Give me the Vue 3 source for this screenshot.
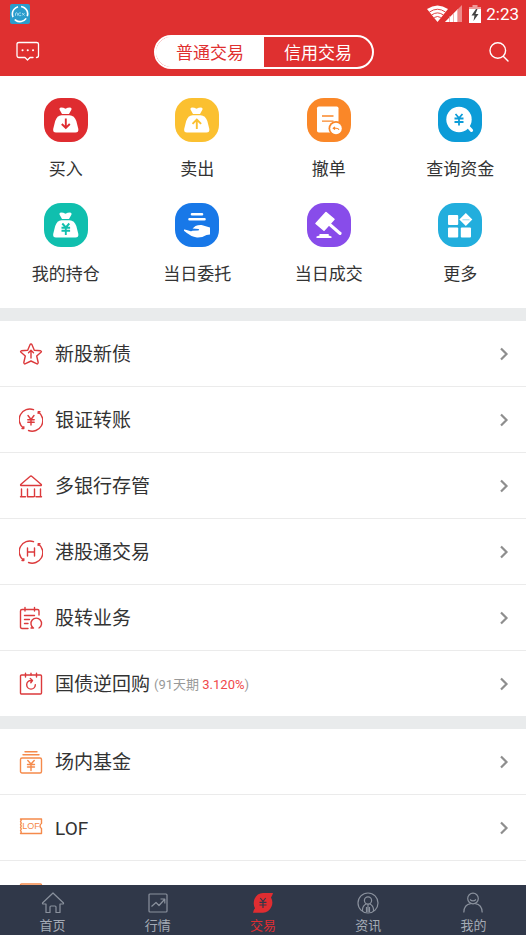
<script setup>
import { ref } from 'vue'

const market = ref('普通交易')
const markets = ['普通交易', '信用交易']

const actions = [
  { label: '买入', icon: 'buy', tone: 'red' },
  { label: '卖出', icon: 'sell', tone: 'yellow' },
  { label: '撤单', icon: 'cancel', tone: 'orange' },
  { label: '查询资金', icon: 'funds', tone: 'blue' },
  { label: '我的持仓', icon: 'hold', tone: 'teal' },
  { label: '当日委托', icon: 'entrust', tone: 'royal' },
  { label: '当日成交', icon: 'deal', tone: 'purple' },
  { label: '更多', icon: 'more', tone: 'sky' },
]

const services = [
  { label: '新股新债', icon: 'star' },
  { label: '银证转账', icon: 'transfer' },
  { label: '多银行存管', icon: 'bank' },
  { label: '港股通交易', icon: 'hk' },
  { label: '股转业务', icon: 'note' },
  { label: '国债逆回购', icon: 'repo', term: '91天期', rate: '3.120%' },
]

const funds = [
  { label: '场内基金', icon: 'fund' },
  { label: 'LOF', icon: 'lof' },
  { label: '', icon: 'card' },
]

const tabs = [
  { label: '首页', icon: 'home' },
  { label: '行情', icon: 'quotes' },
  { label: '交易', icon: 'trade' },
  { label: '资讯', icon: 'news' },
  { label: '我的', icon: 'me' },
]
const current = ref('交易')
</script>

<template>
  <div class="app">
    <header class="top">
      <div class="status">
        <svg class="app-badge" width="20" height="20" viewBox="0 0 20 20">
          <rect width="20" height="20" rx="2" fill="#2b9ccc" />
          <circle cx="10" cy="10" r="7.6" fill="none" stroke="#fff" stroke-width="1.6" stroke-dasharray="13 3" transform="rotate(35 10 10)" />
          <path d="M5.500 11.800V9.300q1.800-1.400 2.200.4v2M11 9H9.300q-.8.1-.8 1.300t.8 1.300H11M12 9l2.600 2.600M14.600 9 12 11.600" fill="none" stroke="#b5e6f7" stroke-width=".8" />
        </svg>
        <div class="status-right">
          <svg width="37" height="18" viewBox="0 0 37 18">
            <path d="M0 4Q10.500-3 21 4L10.500 17Z" fill="#fff" />
            <path d="M2.500 7Q10.500 1.500 18.500 7M4.800 9.800Q10.500 6 16.200 9.800M7.200 12.500Q10.500 10.500 13.800 12.500" fill="none" stroke="#df3030" stroke-width=".9" />
            <path d="M18 17 35 0V17Z" fill="#ee8989" />
            <path d="M18 17 31 4V17Z" fill="#fff" />
            <path d="M22.500 11v6M26.500 8v9M30.500 4v13" stroke="#e89292" stroke-width=".7" />
          </svg>
          <svg width="12" height="18" viewBox="0 0 12 18">
            <path d="M3.500 0h5v2H12v3H0V2h3.500Z" fill="#ee9b9b" />
            <path d="M0 4h12v14H0Z" fill="#fff" />
            <path d="M7 4 2.500 10.500h3L4.500 16 9.500 9h-3L8.500 4Z" fill="#444" />
          </svg>
          <span class="clock">2:23</span>
        </div>
      </div>
      <div class="bar">
        <button class="icon-btn" aria-label="消息">
          <svg width="24" height="22" viewBox="0 0 24 22" fill="none" stroke="#fff" stroke-width="1.300" stroke-linejoin="round" stroke-linecap="round">
            <path d="M17 16.500h-3L11.500 19 9 16.500H3Q1 16.500 1 14.500V3Q1 1.500 3 1.500H20.500Q22.500 1.500 22.500 3V14.500Q22.500 16.500 20.500 16.500" />
            <path d="M6.500 9.200h.1M11.700 9.200h.1M17 9.200h.1" stroke-width="2" />
          </svg>
        </button>
        <div class="segment">
          <button v-for="m in markets" :key="m" :class="{ on: market === m }" @click="market = m">{{ m }}</button>
        </div>
        <button class="icon-btn" aria-label="搜索">
          <svg width="22" height="22" viewBox="0 0 22 22" fill="none" stroke="#fff" stroke-width="1.400" stroke-linecap="round">
            <circle cx="9.800" cy="9.500" r="7.800" />
            <path d="m15.500 15.500 4.500 4.500" />
          </svg>
        </button>
      </div>
    </header>

    <main class="content">
      <section class="grid">
        <button v-for="a in actions" :key="a.label" class="action">
          <span class="tile" :class="a.tone">
            <svg width="44" height="44" viewBox="0 0 44 44">
              <template v-if="a.icon === 'buy' || a.icon === 'sell' || a.icon === 'hold'">
                <path d="M15.500 11.500Q15 9.500 17 9.500Q19.500 9.500 21.500 10.800Q23.500 9.500 26 9.500Q28 9.500 27.500 11.500L25 16H18Z" fill="#fff" />
                <path d="M17.500 17.200H25.500Q30.500 17.500 32.300 23L34.300 31Q34.800 34.500 31.500 34.500H12Q8.700 34.500 9.200 31L11.200 23Q13 17.500 17.500 17.200Z" fill="#fff" />
                <g class="mark" fill="none" stroke-width="1.900">
                  <path v-if="a.icon === 'buy'" d="M21.800 20.500V30M17.800 26l4 4 4-4" />
                  <path v-else-if="a.icon === 'sell'" d="M21.800 31V21.500M17.500 25.800l4.300-4.300 4.300 4.300" />
                  <path v-else d="m18.300 20.500 3.500 4 3.500-4M17.500 24.700h8.600M17.500 27.800h8.600M21.800 24.500V32" />
                </g>
              </template>
              <template v-else-if="a.icon === 'cancel'">
                <rect x="10" y="8.500" width="21.500" height="26" rx="1.800" fill="#fff" />
                <path class="mark" d="M15 18h11.500M15 23.200h11.500" stroke-width="1.300" />
                <circle class="mark-fill" cx="29" cy="30.500" r="7.500" />
                <circle cx="29" cy="30.500" r="5.800" fill="#fff" />
                <path class="mark" d="M32 31.800q-.5-1.500-3-1.500h-2.500M28 28.800 26.200 30.300l1.800 1.300" fill="none" stroke-width="1.100" />
              </template>
              <template v-else-if="a.icon === 'funds'">
                <circle cx="21" cy="21.500" r="12.700" fill="#fff" />
                <path d="m29 27.500 4.500 4.800" stroke="#fff" stroke-width="3.200" stroke-linecap="round" />
                <path class="mark" d="m17.500 16 3.500 4 3.500-4M16.500 20.500h9M16.500 24h9M21 20v7.500" fill="none" stroke-width="1.800" />
              </template>
              <template v-else-if="a.icon === 'entrust'">
                <path d="M17 11.300h10M14.500 16.300h15" stroke="#fff" stroke-width="2.600" stroke-linecap="round" />
                <path d="M9 26.500Q10 26 15 28Q16.500 28.600 17.500 27.800L23 27.500Q25 27.200 23.500 26L17.500 25.500L20.500 23Q23 21.800 26.500 22L35 24.500V31.500L31.500 32Q27 34.800 22 34.500Q16 34 9 27.800Z" fill="#fff" />
              </template>
              <template v-else-if="a.icon === 'deal'">
                <path d="M19 9.500 27 16.300 17 27.300 9 20.500Z" fill="#fff" stroke="#fff" stroke-width="1.500" stroke-linejoin="round" />
                <path d="m22.800 21.500 10.300 9" stroke="#fff" stroke-width="3" stroke-linecap="round" />
                <path d="M12.500 31h9.200v1.500l2.800 1v1.500H9.500v-1.500l3-1Z" fill="#fff" />
              </template>
              <g v-else fill="#fff">
                <rect x="10" y="12" width="10.200" height="10" rx="1" />
                <rect x="10" y="24.500" width="10.200" height="10" rx="1" />
                <rect x="22.800" y="24.500" width="10.200" height="10" rx="1" />
                <path d="m27.800 10 6.500 6.500-6.500 6.500-6.500-6.500Z" />
                <path class="mark" d="M24.500 16.800h7" stroke-width=".8" opacity=".6" />
              </g>
            </svg>
          </span>
          <span class="action-label">{{ a.label }}</span>
        </button>
      </section>

      <ul v-for="(list, i) in [services, funds]" :key="i" class="list" :class="{ warm: i === 1 }">
        <li v-for="item in list" :key="item.icon">
          <a href="#" class="row">
            <svg class="row-icon" width="24" height="26" viewBox="0 -1 24 26" fill="none" stroke="currentColor" stroke-width="1.400" stroke-linejoin="round" stroke-linecap="round">
              <template v-if="item.icon === 'star'">
                <path d="M12 2Q12.700 2 13 2.700L15.300 8.300L21.600 8.800Q23 9.300 22 10.300L17.700 14L19.200 20.500Q19 22.500 17.500 21.700L12 19L6.500 21.700Q5 22.500 4.800 20.500L6.300 14L2 10.300Q1 9.300 2.400 8.800L8.700 8.300L11 2.700Q11.300 2 12 2Z" />
                <path d="M12 16V8.500M9.500 10.800 12 8.300l2.500 2.500" />
              </template>
              <template v-else-if="item.icon === 'transfer' || item.icon === 'hk'">
                <path d="M4.300 20A10.600 10.600 0 0 1 14.500 1.700M19.700 4.200A10.600 10.600 0 0 1 9.500 22.500" />
                <path d="M4.800 18.800v1.700H3M19.200 5.400V3.700H21" />
                <path v-if="item.icon === 'transfer'" d="m9 7.500 3 4 3-4M8.800 11.800h6.400M8.800 14.300h6.400M12 11.500V17" />
                <path v-else d="M8.500 8v8M15.500 8v8M8.500 12h7" />
              </template>
              <template v-else-if="item.icon === 'bank'">
                <path d="M11 2.500Q12 1.500 13 2.500L22.300 10.500Q22.800 11.500 21.500 11.500H2.500Q1.200 11.500 1.700 10.500ZM2.500 15v7.500M8.500 15v7.500M15.500 15v7.500M21.500 15v7.500M1.500 22.700h5M8.500 22.700h6M17 22.700h5.500" />
              </template>
              <template v-else-if="item.icon === 'note'">
                <path d="M9 22.500H3Q1.500 22.500 1.500 21V5Q1.500 3.500 3 3.500H18.500Q20 3.500 20 5V9M6 1.500V5M15.500 1.500V5M5.500 9.500h10M5.500 13.500h5M5.500 17.500h3.500" />
                <path d="M14.500 22a5.300 5.300 0 1 1 5.500 0M14.500 22h-2.500" />
              </template>
              <template v-else-if="item.icon === 'repo'">
                <rect x="1.500" y="3" width="21" height="19" rx="1" />
                <path d="M6.500 1.300V5M12 1.300V3M17.500 1.300V5M16.300 12.800a4.300 4.300 0 1 1-4.300-4.300h.8M11.300 6.500 13.500 8.500 11.800 10.700" />
              </template>
              <template v-else-if="item.icon === 'fund'">
                <rect x="1.500" y="8" width="21" height="15" rx="1.500" />
                <path d="M6 1.700h12M4 4.700h16M8.800 10.500 12 14l3.200-3.500M8.500 14.500h7M8.500 17h7M12 14v6.500" />
              </template>
              <template v-else-if="item.icon === 'lof'">
                <path d="M1.500 3h21v4.500q-1.500.8-1.500 2.500t1.500 2.500V17.500h-21l.8-1.500-.8-1.500.8-1.500-.8-1.500.8-1.500-.8-1.500.8-1.500-.8-1.500.8-1.500Z" />
                <text x="12" y="13" text-anchor="middle" class="lof-text">LOF</text>
              </template>
              <rect v-else x="1.500" y="2" width="21" height="19" rx="1" />
            </svg>
            <span class="row-label">{{ item.label }}</span>
            <span v-if="item.rate" class="row-note">({{ item.term }} <b>{{ item.rate }}</b>)</span>
            <svg class="chevron" width="10" height="14" viewBox="0 0 10 14" fill="none" stroke="#8e8e8e" stroke-width="2.200">
              <path d="m2 1.500 5.500 5.500L2 12.500" />
            </svg>
          </a>
        </li>
      </ul>
    </main>

    <nav class="tabs">
      <a v-for="t in tabs" :key="t.label" href="#" class="tab" :class="{ active: current === t.label }" @click.prevent="current = t.label">
        <svg width="24" height="22" viewBox="0 0 24 22" fill="none" stroke="currentColor" stroke-width="1.200" stroke-linejoin="round">
          <path v-if="t.icon === 'home'" d="M12 1 22.500 11q.3 1-1 1H19v8.500h-4V15q0-1-1-1h-4q-1 0-1 1v5.500H5V12H2.500q-1.300 0-1-1Z" />
          <template v-else-if="t.icon === 'quotes'">
            <rect x="3" y="2" width="18" height="18" rx="1" />
            <path d="m5.500 14.500 4.500-4 3 3 5.500-6M14.500 7h4.300v4.500" />
          </template>
          <template v-else-if="t.icon === 'trade'">
            <path d="M12 1H22Q21.500 3.500 20 5.500Q22.500 10 20.500 14.500Q18 20.500 12 20.700H2Q2.200 18.300 4 16.300Q1.700 12 3.500 7Q6 1.200 12 1Z" fill="currentColor" stroke="none" />
            <path d="M9.300 6 12 9.500 14.700 6M8.500 10.300h7M8.500 13h7M12 10V16" stroke="#303849" stroke-width="1.200" />
          </template>
          <template v-else-if="t.icon === 'news'">
            <circle cx="12" cy="11" r="10" />
            <circle cx="12" cy="8.500" r="3.600" />
            <path d="M6.500 19v-1.500q.3-4 3.700-5.500M17.500 19v-1.500q-.3-4-3.700-5.500M12 12v8M10.500 15v5M13.500 15v5" />
          </template>
          <template v-else>
            <circle cx="12" cy="6.500" r="5.300" />
            <path d="M9 7.500q3 2.800 6 0M2.800 20.500q.2-8 7-8.800M21.200 20.500q-.2-8-7-8.800" />
          </template>
        </svg>
        <span>{{ t.label }}</span>
      </a>
    </nav>
  </div>
</template>

<style>
body {
  margin: 0;
  background: #fff;
}
</style>

<style scoped>
.app {
  display: flex;
  flex-direction: column;
  height: 100vh;
  overflow: hidden;
  background: #fff;
  color: #333;
  font-family: Roboto, "Noto Sans CJK SC", sans-serif;
}
button {
  margin: 0;
  padding: 0;
  border: 0;
  background: none;
  color: inherit;
  font: inherit;
  cursor: pointer;
}
a {
  color: inherit;
  text-decoration: none;
}
svg {
  display: block;
  flex: none;
}
.top {
  flex: none;
  background: #df3030;
  color: #fff;
}
.status {
  display: flex;
  align-items: center;
  justify-content: space-between;
  height: 28px;
  padding: 0 7px 0 10px;
}
.status-right {
  display: flex;
  align-items: center;
  gap: 5px;
}
.clock {
  font-size: 17px;
  line-height: 28px;
}
.bar {
  display: flex;
  align-items: center;
  justify-content: space-between;
  height: 48px;
  padding: 0 16px;
}
.segment {
  display: flex;
  box-sizing: border-box;
  width: 220px;
  height: 34px;
  border: 2px solid #fff;
  border-radius: 17px;
  overflow: hidden;
}
.segment button {
  flex: 1;
  font-size: 17px;
  line-height: 32px;
}
.segment .on {
  background: #fff;
  color: #df3030;
}
.segment .on:first-child {
  box-shadow: -2px 0 0 2px #fff;
}
.segment .on:last-child {
  box-shadow: 2px 0 0 2px #fff;
}
.content {
  flex: 1;
  min-height: 0;
  overflow: hidden;
}
.grid {
  display: grid;
  grid-template-columns: repeat(4, 1fr);
  row-gap: 18px;
  padding: 22px 0 18px;
}
.action {
  display: flex;
  flex-direction: column;
  align-items: center;
  gap: 11px;
}
.tile {
  border-radius: 17px;
  overflow: hidden;
  background: var(--tone);
}
.mark {
  stroke: var(--tone);
}
.mark-fill {
  fill: var(--tone);
}
.red { --tone: #df2c30; }
.yellow { --tone: #fbc030; }
.orange { --tone: #fa8728; }
.blue { --tone: #0c9cd8; }
.teal { --tone: #10bfae; }
.royal { --tone: #1878e8; }
.purple { --tone: #884cea; }
.sky { --tone: #22aedd; }
.action-label {
  font-size: 17px;
  line-height: 32px;
}
.list {
  margin: 0;
  padding: 0;
  list-style: none;
  border-top: 13px solid #e9ebec;
}
.list li + li {
  border-top: 1px solid #ebebeb;
}
.row {
  display: flex;
  align-items: center;
  box-sizing: border-box;
  height: 65px;
  padding: 0 17px 0 19px;
}
.row-icon {
  color: #dc3a3c;
}
.warm .row-icon {
  color: #f58a4b;
}
.lof-text {
  font-family: "Liberation Sans", sans-serif;
  font-size: 9px;
  fill: currentColor;
  stroke: none;
}
.row-label {
  margin-left: 12px;
  padding-top: 2px;
  font-size: 19px;
  line-height: 28px;
}
.row-note {
  margin-left: 4px;
  padding-top: 2px;
  color: #999;
  font-size: 13px;
  line-height: 28px;
}
.row-note b {
  color: #f0484a;
  font-weight: 400;
}
.chevron {
  margin-left: auto;
}
.tabs {
  display: flex;
  flex: none;
  height: 50px;
  background: #303849;
  color: #a4abb6;
}
.tab {
  display: flex;
  flex: 1;
  flex-direction: column;
  align-items: center;
  padding-top: 7px;
  font-size: 13px;
  line-height: 24px;
}
.tab svg {
  color: #8a919d;
}
.tab.active,
.tab.active svg {
  color: #e02d31;
}
</style>
